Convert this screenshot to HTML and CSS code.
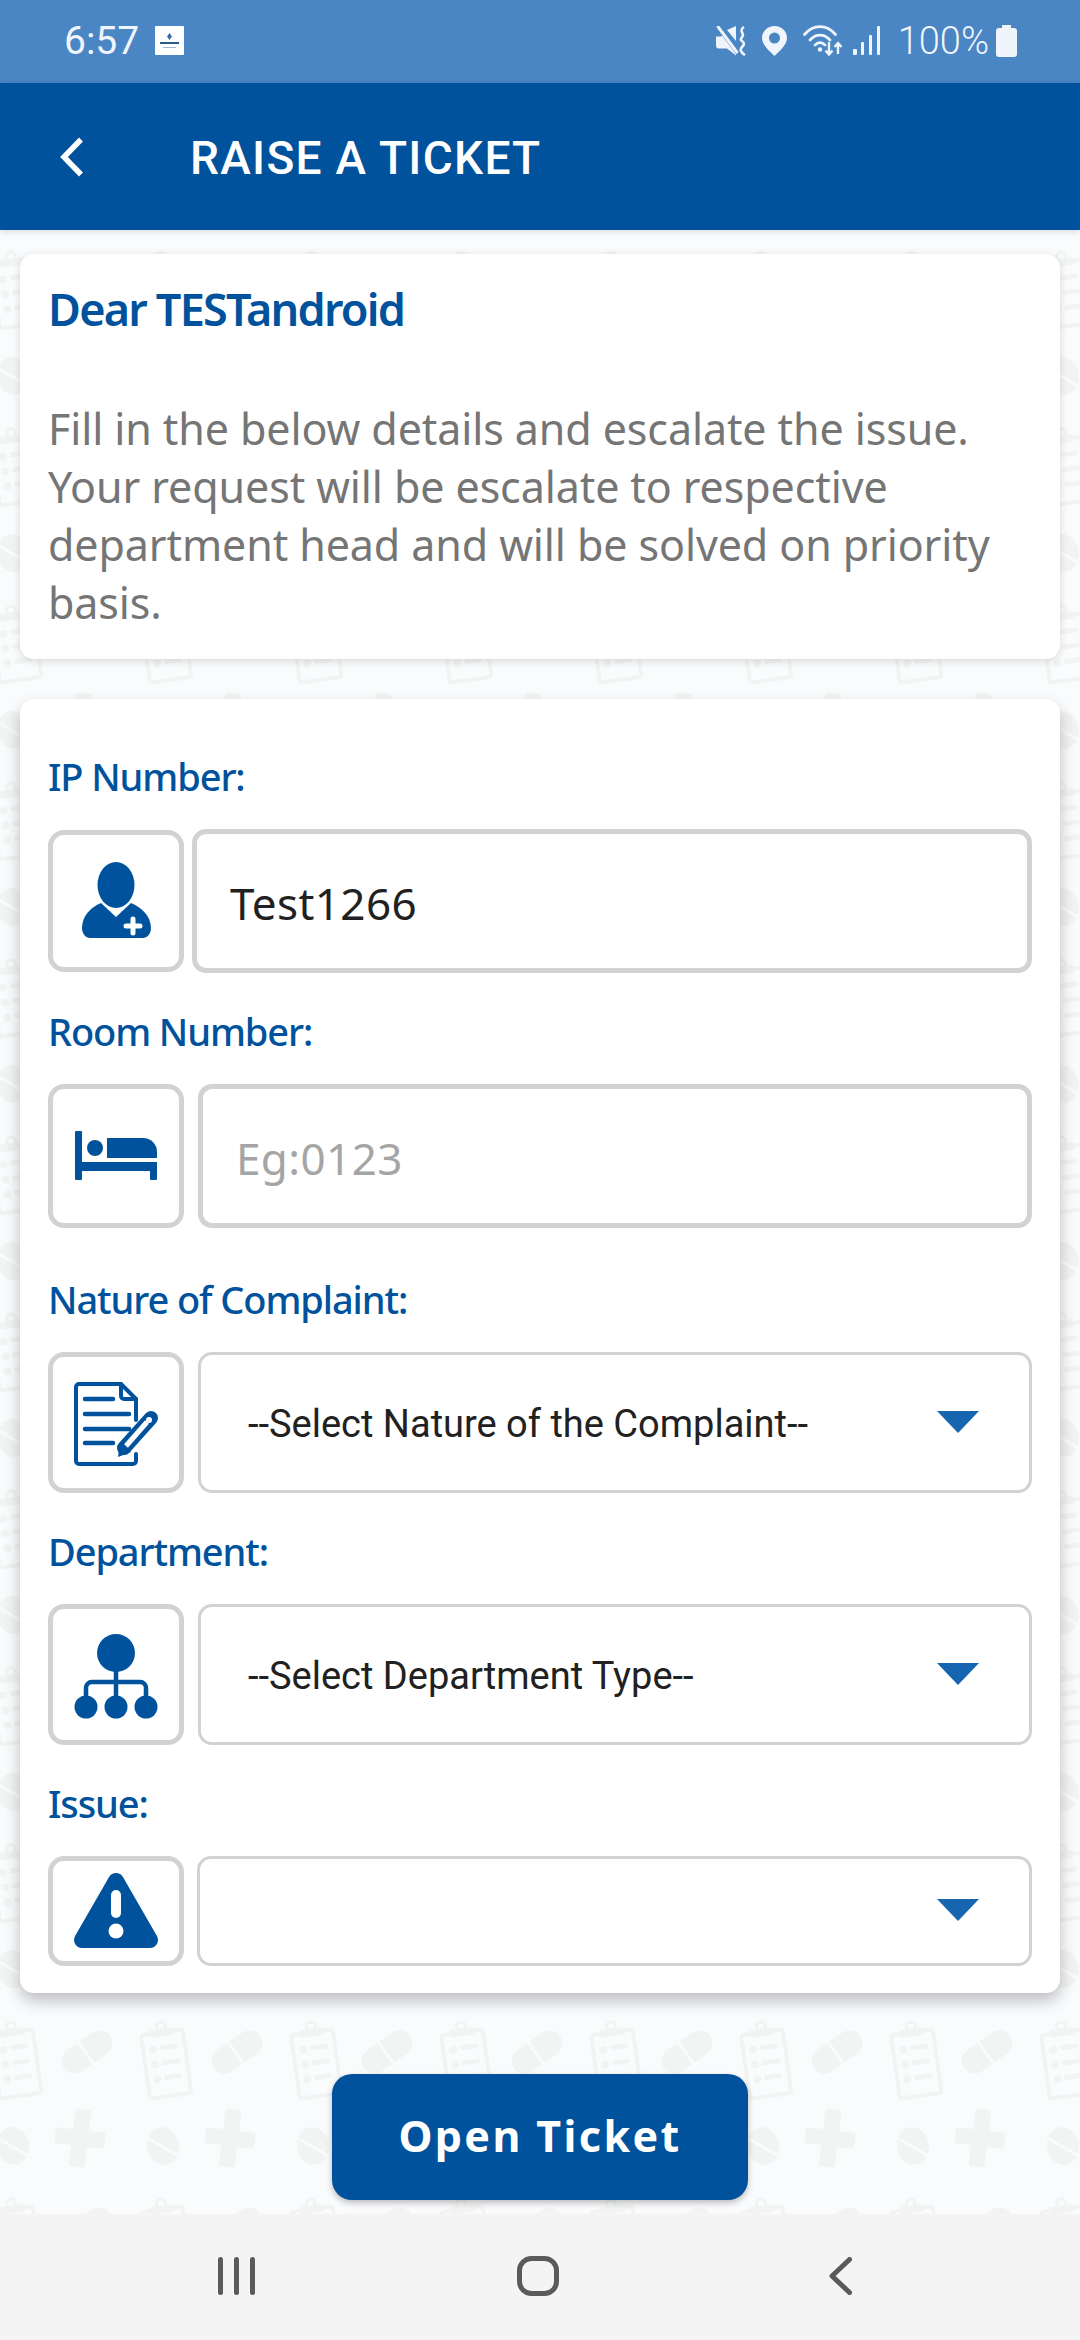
FILE: index.html
```html
<!DOCTYPE html>
<html lang="en">
<head>
<meta charset="utf-8">
<title>Raise a Ticket</title>
<link rel="stylesheet" href="styles.css">
</head>
<body>
<div class="screen">
  <header class="status">
    <div class="status-left">
      <span class="time">6:57</span>
      <svg class="notif" viewBox="0 0 29 29"><rect width="29" height="29" rx="1" fill="#fff"/><path d="M14.500 7l2.500 3.500-2.500 3.500-2.500-3.500z" fill="#3a6ea8"/><rect x="5" y="16" width="19" height="2" fill="#2a5a90"/><rect x="8" y="21" width="13" height="1" fill="#9db6d2"/></svg>
    </div>
    <div class="status-right">
      <svg class="ic-mute" viewBox="0 0 30 30"><path d="M0 10.500h5l2-2 13 15v6l-9-7H3a3 3 0 0 1-3-3zM11 4l9-4v15z" fill="#f0f4fb"/><path d="M1 1l20 27" stroke="#4a85c4" stroke-width="2"/><path d="M1.500 0l20 27" stroke="#f0f4fb" stroke-width="3"/><path d="M28 1c-5 3-1 6-1 8s-4 4-1 6 2 4 0 6-2 5 3 8" fill="none" stroke="#f0f4fb" stroke-width="2.600"/></svg>
      <svg class="ic-pin" viewBox="0 0 25 30"><path d="M12.500 0C5.500 0 0 5.300 0 12c0 7 8 13.500 12.500 18C17 25.500 25 19 25 12 25 5.300 19.500 0 12.500 0z" fill="#f0f4fb"/><circle cx="12.500" cy="12" r="5.500" fill="#4a85c4"/></svg>
      <svg class="ic-wifi" viewBox="0 0 40 31"><g fill="none" stroke="#f0f4fb" stroke-width="2.800" stroke-linecap="round"><path d="M1.500 9.500c9-10.500 22-10.500 31 0"/><path d="M7 15c6-6.500 14-6.500 20 0"/><path d="M12 20c3-3 7-3 10 0"/></g><circle cx="17" cy="24.500" r="2.200" fill="#f0f4fb"/><path d="M26 17v12M22.500 25.500l3.500 4 3.500-4M35 29V18M31.500 22l3.500-4 3.500 4" fill="none" stroke="#f0f4fb" stroke-width="2.400"/></svg>
      <svg class="ic-signal" viewBox="0 0 27 29"><g fill="#f0f4fb"><rect y="23" width="4" height="6" rx="1"/><rect x="8" y="16" width="3" height="13" rx="1"/><rect x="16" y="9" width="3" height="20" rx="1"/><rect x="24" width="3" height="29" rx="1"/></g></svg>
      <span class="pct">100%</span>
      <svg class="ic-batt" viewBox="0 0 21 32"><path d="M6 0h9v3h3a3 3 0 0 1 3 3v23a3 3 0 0 1-3 3H3a3 3 0 0 1-3-3V6a3 3 0 0 1 3-3h3z" fill="#f0f4fb"/></svg>
    </div>
  </header>

  <nav class="appbar">
    <svg class="back" viewBox="0 0 24 40"><path d="M21 2.500L4 20l17 17.500" fill="none" stroke="#fff" stroke-width="5.500"/></svg>
    <h1 class="title">RAISE A TICKET</h1>
  </nav>

  <main class="content">
    <section class="card intro">
      <h2 class="dear">Dear TESTandroid</h2>
      <p class="lead">Fill in the below details and escalate the issue. Your request will be escalate to respective department head and will be solved on priority basis.</p>
    </section>

    <section class="card form">
      <div class="field">
        <label class="label">IP Number:</label>
        <div class="row row-first">
          <span class="iconbox">
            <svg class="ficon" viewBox="0 0 90 90"><ellipse cx="45" cy="29" rx="18.500" ry="23" fill="#01529c"/><path d="M11 72c0-12 9-21 19-25l15 14 15-14c10 4 20 13 20 25 0 6-4 10-8 10H19c-4 0-8-4-8-10z" fill="#01529c"/><path d="M62 63v14M55 70h14" stroke="#fff" stroke-width="5" stroke-linecap="round"/></svg>
          </span>
          <div class="input thick filled">Test1266</div>
        </div>
      </div>

      <div class="field field-wide">
        <label class="label">Room Number:</label>
        <div class="row row-room">
          <span class="iconbox">
            <svg class="ficon" viewBox="0 0 90 90"><g fill="#01529c"><rect x="4" y="20" width="7" height="49" rx="1"/><rect x="4" y="51" width="82" height="9"/><rect x="79" y="51" width="7" height="18" rx="1"/><circle cx="24" cy="37" r="8"/><path d="M36 27h36a14 14 0 0 1 14 14v6H36z"/></g></svg>
          </span>
          <div class="input thick placeholder">Eg:0123</div>
        </div>
      </div>

      <div class="field">
        <label class="label">Nature of Complaint:</label>
        <div class="row row-select">
          <span class="iconbox">
            <svg class="ficon" viewBox="0 0 90 90"><g fill="none" stroke="#01529c" stroke-width="4" stroke-linejoin="round" stroke-linecap="round"><path d="M65 42V21L50 6H8a3 3 0 0 0-3 3v74a3 3 0 0 0 3 3h54a3 3 0 0 0 3-3v-7"/><path d="M50 6v12a3 3 0 0 0 3 3h12"/></g><path d="M14 21h28M14 36h44M14 51h44M14 65h28" stroke="#01529c" stroke-width="4.500" stroke-linecap="round"/><path d="M53 70l27-30" stroke="#01529c" stroke-width="14" stroke-linecap="round"/><path d="M55 68l21-24" stroke="#fff" stroke-width="5"/><path d="M47 79l2-14 11 9z" fill="#01529c"/><circle cx="78" cy="42" r="3" fill="#fff"/></svg>
          </span>
          <div class="input select"><span class="seltext">--Select Nature of the Complaint--</span><span class="caret"></span></div>
        </div>
      </div>

      <div class="field">
        <label class="label">Department:</label>
        <div class="row row-select">
          <span class="iconbox">
            <svg class="ficon" viewBox="0 0 90 90"><g fill="#01529c"><circle cx="45" cy="23" r="19"/><circle cx="15" cy="77" r="11.500"/><circle cx="45" cy="77" r="11.500"/><circle cx="75" cy="77" r="11.500"/></g><path d="M45 30v42M15 72V58a6 6 0 0 1 6-6h48a6 6 0 0 1 6 6v14" fill="none" stroke="#01529c" stroke-width="4.500"/></svg>
          </span>
          <div class="input select"><span class="seltext">--Select Department Type--</span><span class="caret"></span></div>
        </div>
      </div>

      <div class="field">
        <label class="label">Issue:</label>
        <div class="row row-issue">
          <span class="iconbox">
            <svg class="ficon" viewBox="0 0 90 90"><path d="M45 15L11 74h68z" fill="#01529c" stroke="#01529c" stroke-width="16" stroke-linejoin="round"/><rect x="40" y="24" width="10" height="28" rx="5" fill="#fff"/><circle cx="45" cy="65" r="7.500" fill="#fff"/></svg>
          </span>
          <div class="input select"><span class="seltext"></span><span class="caret"></span></div>
        </div>
      </div>
    </section>

    <button class="submit" type="button">Open Ticket</button>
  </main>

  <footer class="navbar">
    <svg class="nav-ic nav-recent" viewBox="0 0 37 38"><path d="M2.500 2.500v33M18.500 2.500v33M34.500 2.500v33" stroke="#5a5a5a" stroke-width="5" stroke-linecap="round"/></svg>
    <svg class="nav-ic nav-home" viewBox="0 0 42 40"><rect x="2.500" y="2.500" width="37" height="35" rx="12" fill="none" stroke="#5a5a5a" stroke-width="5"/></svg>
    <svg class="nav-ic nav-back" viewBox="0 0 23 38"><path d="M20.500 2.500L3 19l17.500 16.500" fill="none" stroke="#5a5a5a" stroke-width="5" stroke-linecap="round" stroke-linejoin="round"/></svg>
  </footer>
</div>
</body>
</html>
```

FILE: styles.css
```css
* { box-sizing: border-box; }
html, body { margin: 0; padding: 0; }
body { width: 1080px; height: 2340px; overflow: hidden; font-family: "Noto Sans", "Lato", sans-serif; }

.screen {
  width: 1080px;
  height: 2340px;
  display: flex;
  flex-direction: column;
  background-color: #fafbfd;
  background-image: url("data:image/svg+xml,%3Csvg xmlns='http://www.w3.org/2000/svg' width='150' height='177' viewBox='0 0 150 177'%3E%3Cg fill='%23f2f4f4'%3E%3Cg transform='rotate(-8 36 44)'%3E%3Crect x='15' y='14' width='42' height='64' rx='3' fill='none' stroke='%23f2f4f4' stroke-width='4'/%3E%3Crect x='24' y='10' width='24' height='8' rx='2'/%3E%3Ccircle cx='36' cy='8' r='4.500' fill='none' stroke='%23f2f4f4' stroke-width='3'/%3E%3Ccircle cx='25' cy='30' r='4'/%3E%3Ccircle cx='25' cy='45' r='4'/%3E%3Ccircle cx='25' cy='60' r='4'/%3E%3Crect x='32' y='27' width='18' height='5' rx='2.500'/%3E%3Crect x='32' y='42' width='18' height='5' rx='2.500'/%3E%3Crect x='32' y='57' width='18' height='5' rx='2.500'/%3E%3C/g%3E%3Cg transform='rotate(-35 107 34)'%3E%3Crect x='79' y='21' width='56' height='26' rx='13'/%3E%3Crect x='104' y='19' width='3' height='30' fill='%23fafbfd'/%3E%3C/g%3E%3Cg transform='rotate(7 100 120)'%3E%3Crect x='75' y='112' width='50' height='16' rx='2'/%3E%3Crect x='92' y='91' width='16' height='58' rx='2'/%3E%3C/g%3E%3Cg transform='rotate(-10 33 128)'%3E%3Cellipse cx='33' cy='128' rx='16' ry='19'/%3E%3C/g%3E%3Cpath d='M14 118l38 22' stroke='%23fafbfd' stroke-width='3'/%3E%3C/g%3E%3C/svg%3E");
  background-size: 150px 177px;
  background-position: 130px 71px;
}

/* status bar */
.status {
  height: 83px;
  background: #4a85c4;
  display: flex;
  justify-content: space-between;
  align-items: center;
  padding: 0 63px 2px 64px;
  color: #f0f4fb;
  font-family: "Roboto", sans-serif;
}
.status-left, .status-right { display: flex; align-items: center; }
.time { font-size: 39px; width: 91px; }
.notif { width: 29px; height: 29px; }
.ic-mute { width: 30px; height: 30px; margin-right: 16px; }
.ic-pin { width: 25px; height: 30px; margin-right: 16px; }
.ic-wifi { width: 40px; height: 31px; margin-right: 10px; }
.ic-signal { width: 27px; height: 29px; margin-right: 18px; }
.pct { font-size: 38px; font-weight: 300; margin-right: 7px; }
.ic-batt { width: 21px; height: 32px; }

/* app bar */
.appbar {
  height: 147px;
  background: #01529c;
  display: flex;
  align-items: center;
  padding-left: 60px;
  box-shadow: 0 2px 6px rgba(0, 0, 0, 0.12);
  position: relative;
}
.back { width: 24px; height: 40px; margin-right: 106px; }
.title {
  margin: 2px 0 0;
  font: 500 46px "Roboto", sans-serif;
  letter-spacing: 1.3px;
  color: #fff;
}

/* content */
.content {
  flex: 1;
  padding: 24px 20px 0;
  display: flex;
  flex-direction: column;
  align-items: center;
}
.card {
  width: 1040px;
  background: #fff;
  border-radius: 14px;
}
.intro {
  height: 405px;
  padding: 26px 28px 0;
  box-shadow: 0 2px 8px rgba(0, 0, 0, 0.14);
}
.dear {
  margin: 0 0 62px;
  font-size: 45px;
  line-height: 58px;
  font-weight: 600;
  letter-spacing: -1.8px;
  color: #01529c;
}
.lead {
  margin: 0;
  font-size: 43px;
  line-height: 58px;
  letter-spacing: -0.1px;
  color: #757575;
}
.form {
  margin-top: 40px;
  height: 1294px;
  padding: 47px 28px 0;
  box-shadow: 0 8px 16px rgba(0, 0, 0, 0.24);
}
.field { margin-bottom: 28px; }
.field-wide { margin-bottom: 41px; }
.field:last-child { margin-bottom: 0; }
.label {
  display: block;
  height: 62px;
  line-height: 60px;
  margin-bottom: 21px;
  font-size: 38px;
  font-weight: 500;
  letter-spacing: -1.1px;
  color: #01529c;
}
.row { display: flex; align-items: center; gap: 14px; }
.row-first { height: 144px; gap: 8px; }
.row-room { height: 144px; }
.row-select { height: 141px; }
.row-issue { height: 110px; gap: 13px; }
.row-first .iconbox { height: 142px; }
.row-room .iconbox { height: 144px; }
.row-select .iconbox { height: 141px; }
.row-issue .iconbox { height: 110px; }
.iconbox {
  flex: 0 0 136px;
  border: 5px solid #d2d2d2;
  border-radius: 16px;
  display: flex;
  align-items: center;
  justify-content: center;
}
.ficon { width: 90px; height: 90px; }
.input {
  flex: 1;
  align-self: stretch;
  display: flex;
  align-items: center;
  background: #fff;
  border-radius: 14px;
}
.thick {
  border: 5px solid #d2d2d2;
  padding: 3px 0 0 33px;
  font-size: 44px;
  letter-spacing: 0.4px;
}
.filled { color: #212121; }
.placeholder { color: #a5a5a5; }
.select {
  border: 3px solid #d2d2d2;
  padding: 0 50px 0 47px;
  justify-content: space-between;
}
.seltext { font: 38px "Roboto", sans-serif; color: #212121; margin-top: 2px; }
.caret {
  width: 0;
  height: 0;
  border-left: 21px solid transparent;
  border-right: 21px solid transparent;
  border-top: 22px solid #1565b0;
  margin-top: -2px;
}

/* button */
.submit {
  margin-top: 81px;
  width: 416px;
  height: 126px;
  flex: none;
  border: 0;
  border-radius: 20px;
  padding: 0 0 3px;
  background: #01529c;
  color: #fff;
  font: 700 43px "Noto Sans", sans-serif;
  letter-spacing: 2.400px;
  box-shadow: 0 3px 6px rgba(0, 0, 0, 0.25);
}

/* nav */
.navbar {
  height: 126px;
  background: #f4f4f4;
  display: flex;
  align-items: center;
  padding: 0 0 2px 218px;
}
.nav-ic { height: 38px; flex: none; }
.nav-recent { width: 37px; margin-right: 262px; }
.nav-home { width: 42px; height: 40px; margin-right: 270px; }
.nav-back { width: 23px; }
```
